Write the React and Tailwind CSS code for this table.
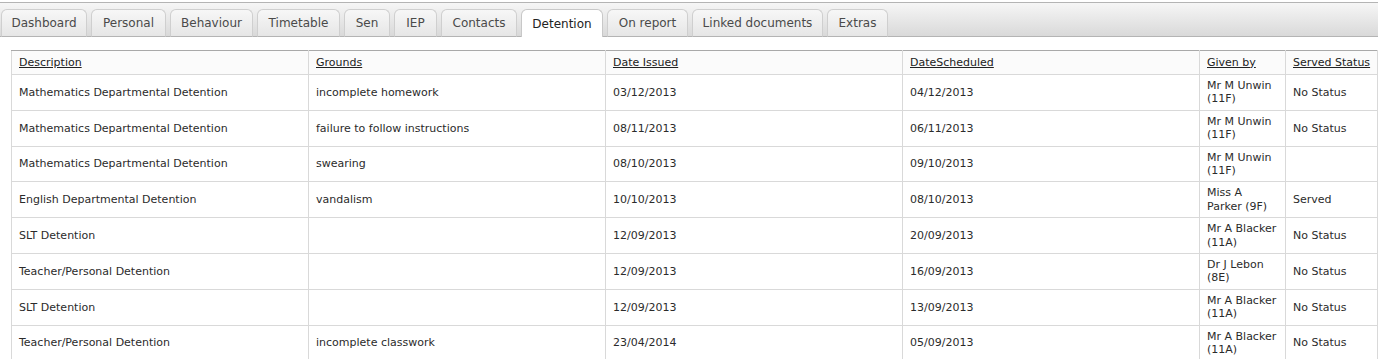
import React from "react";

const tabs = [
  ["Dashboard", 86],
  ["Personal", 75],
  ["Behaviour", 83],
  ["Timetable", 83],
  ["Sen", 46],
  ["IEP", 43],
  ["Contacts", 76],
  ["Detention", 82],
  ["On report", 81],
  ["Linked documents", 131],
  ["Extras", 61],
];

const rows = [
  ["Mathematics Departmental Detention", "incomplete homework", "03/12/2013", "04/12/2013", ["Mr M Unwin", "(11F)"], "No Status"],
  ["Mathematics Departmental Detention", "failure to follow instructions", "08/11/2013", "06/11/2013", ["Mr M Unwin", "(11F)"], "No Status"],
  ["Mathematics Departmental Detention", "swearing", "08/10/2013", "09/10/2013", ["Mr M Unwin", "(11F)"], ""],
  ["English Departmental Detention", "vandalism", "10/10/2013", "08/10/2013", ["Miss A", "Parker (9F)"], "Served"],
  ["SLT Detention", "", "12/09/2013", "20/09/2013", ["Mr A Blacker", "(11A)"], "No Status"],
  ["Teacher/Personal Detention", "", "12/09/2013", "16/09/2013", ["Dr J Lebon", "(8E)"], "No Status"],
  ["SLT Detention", "", "12/09/2013", "13/09/2013", ["Mr A Blacker", "(11A)"], "No Status"],
  ["Teacher/Personal Detention", "incomplete classwork", "23/04/2014", "05/09/2013", ["Mr A Blacker", "(11A)"], "No Status"],
];

const headers = ["Description", "Grounds", "Date Issued", "DateScheduled", "Given by", "Served Status"];
const widths = [297, 297, 297, 297, 86, 92];

export default function App() {
  return (
    <div className="min-h-[359px] bg-white font-['DejaVu_Sans',Verdana,sans-serif] pt-[2px] overflow-hidden">
      <div className="h-[35px] border-t border-b border-[#b4b4b4] bg-gradient-to-b from-[#f6f6f6] to-[#d9d9d9] flex items-end gap-1 pl-px">
        {tabs.map(([name, w]) => {
          const active = name === "Detention";
          return (
            <div
              key={name}
              style={{ width: w }}
              className={
                active
                  ? "h-[28px] -mb-px flex items-center justify-center rounded-t-[6px] border border-b-0 border-[#c8c8c8] bg-white text-[12px] text-[#222] whitespace-nowrap"
                  : "h-[28px] -mb-px flex items-center justify-center rounded-t-[6px] border border-[#cfcfcf] border-b-[#b4b4b4] bg-gradient-to-b from-[#f7f7f7] to-[#e6e6e6] text-[12px] text-[#4a4a4a] whitespace-nowrap"
              }
            >
              {name}
            </div>
          );
        })}
      </div>
      <table className="mt-[13px] ml-[11px] w-[1367px] table-fixed border-collapse border border-[#a9a9a9] text-[11px] text-[#2b2b2b] leading-[13.4px]">
        <colgroup>
          {widths.map((w, i) => (
            <col key={i} style={{ width: w }} />
          ))}
        </colgroup>
        <thead>
          <tr className="bg-[#fbfbfb]">
            {headers.map((h) => (
              <th
                key={h}
                className="h-[24px] border border-[#d9d9d9] border-t-[#a9a9a9] px-[7px] py-0 text-left font-normal text-[#222] align-middle whitespace-nowrap overflow-hidden"
              >
                <span className="underline">{h}</span>
              </th>
            ))}
          </tr>
        </thead>
        <tbody>
          {rows.map((r, i) => (
            <tr key={i}>
              {r.map((c, j) => (
                <td
                  key={j}
                  className="border border-[#d9d9d9] px-[7px] py-[4px] align-middle"
                >
                  {Array.isArray(c) ? (
                    <>
                      <div className="whitespace-nowrap">{c[0]}</div>
                      <div className="whitespace-nowrap">{c[1]}</div>
                    </>
                  ) : (
                    c
                  )}
                </td>
              ))}
            </tr>
          ))}
        </tbody>
      </table>
    </div>
  );
}
